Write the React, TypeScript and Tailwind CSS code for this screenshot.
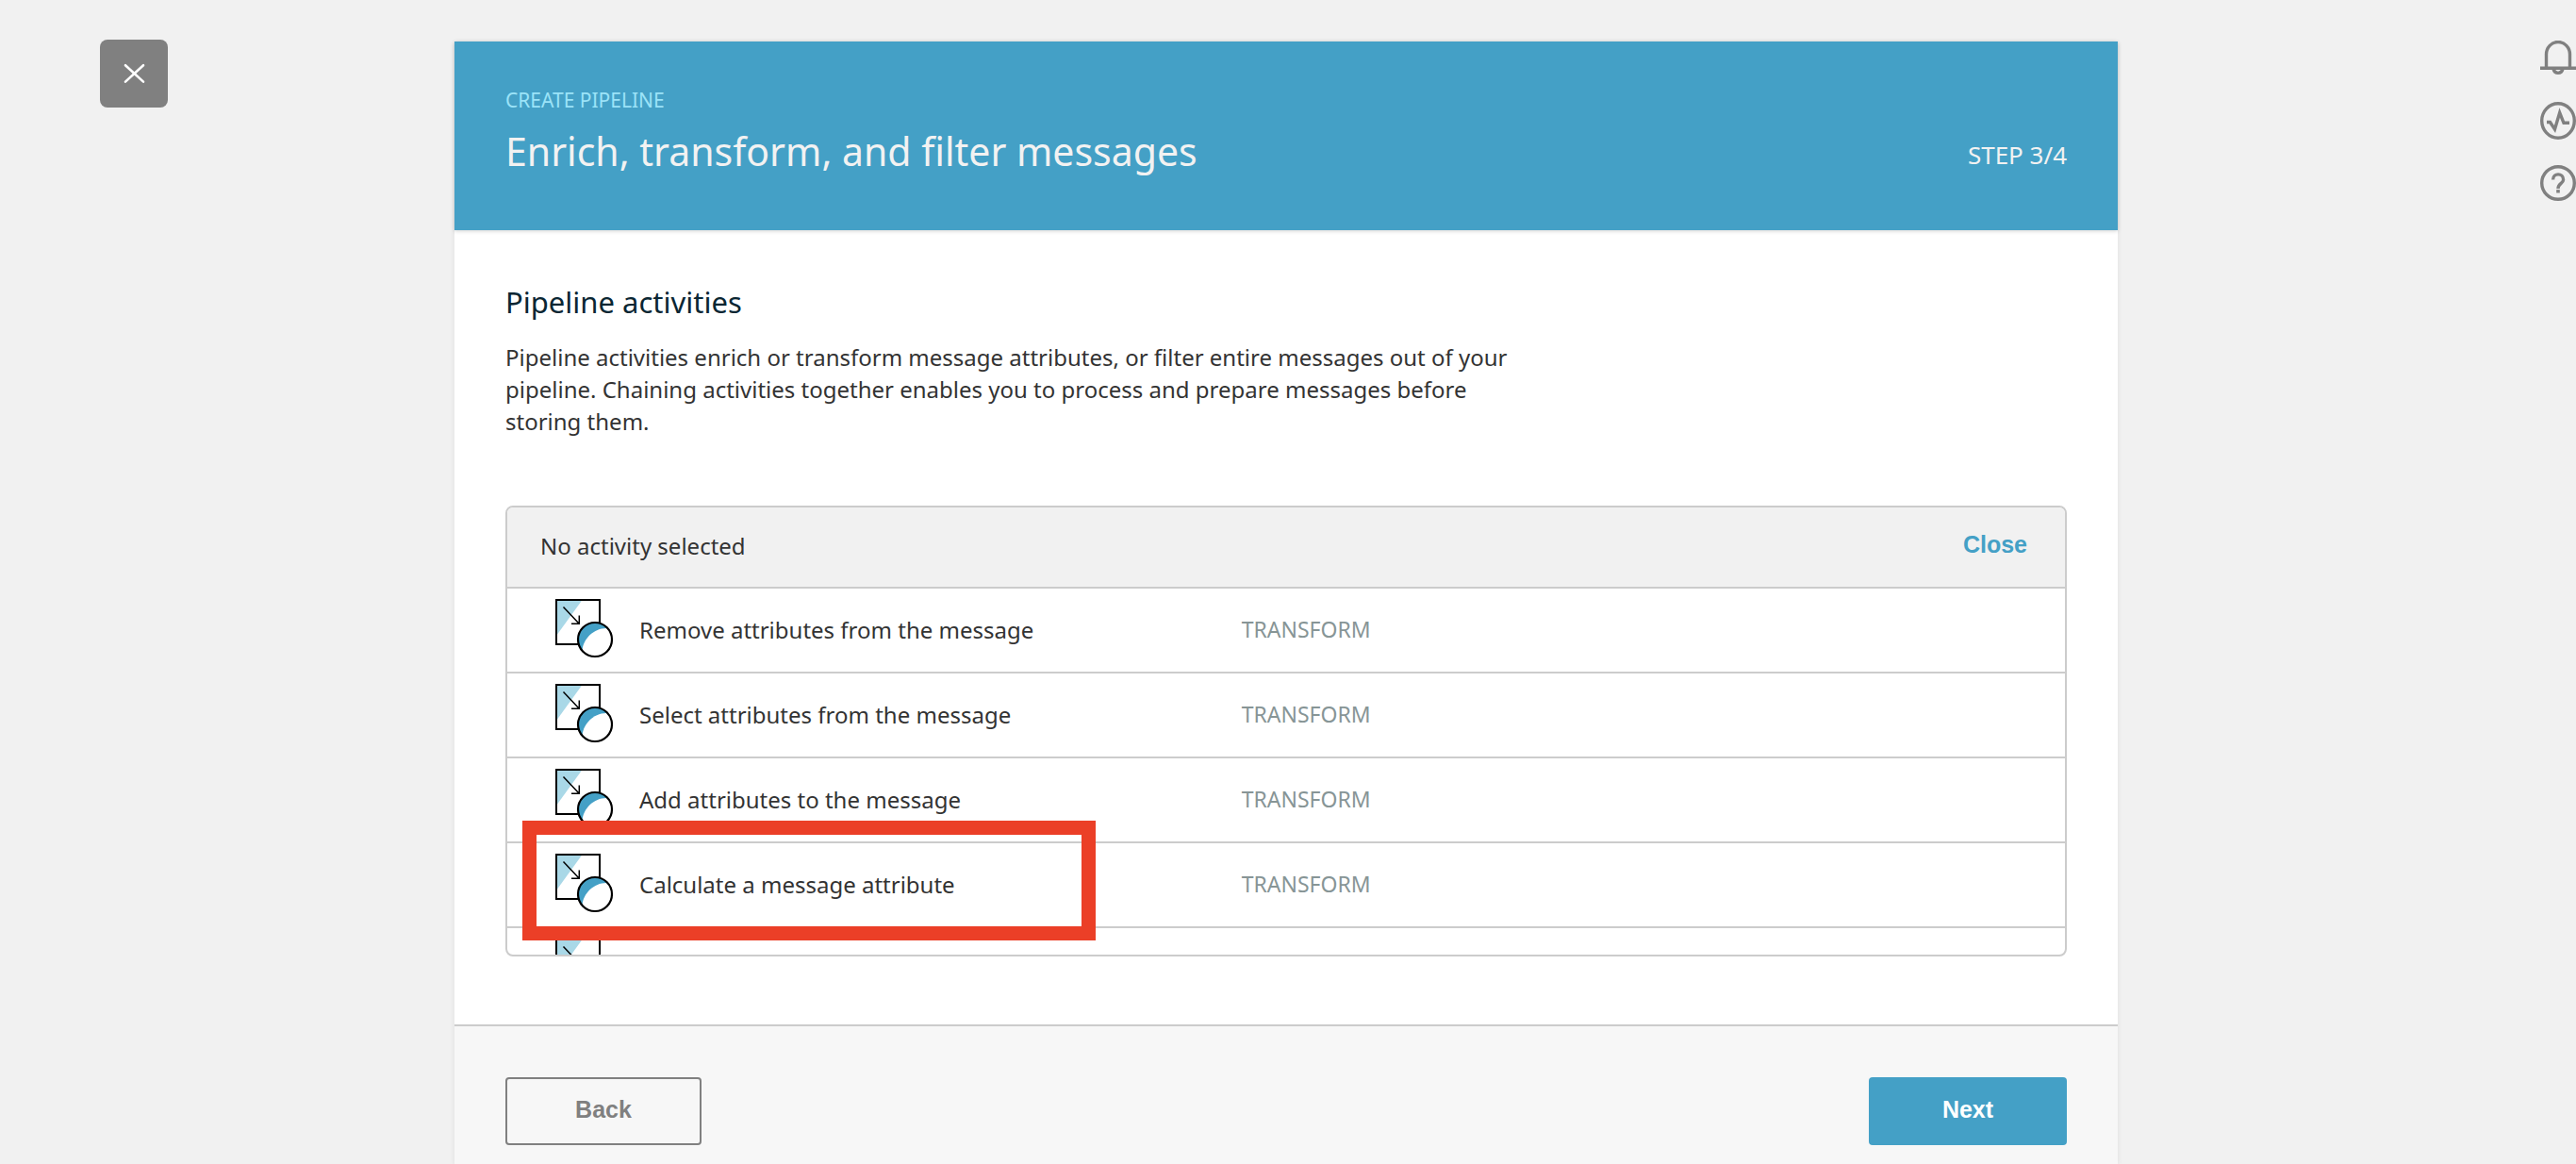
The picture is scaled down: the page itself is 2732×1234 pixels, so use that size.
import { useState } from "react";

function CloseIcon() {
  return (
    <svg className="h-6 w-6" viewBox="0 0 24 24" fill="none" stroke="white" strokeWidth="2.6" strokeLinecap="round" aria-hidden="true">
      <path d="M3 3.2 L22 20.6 M22 3.2 L3 20.6" />
    </svg>
  );
}

function BellIcon() {
  return (
    <svg className="h-[38px] w-[38px]" viewBox="0 0 38 38" fill="none" stroke="#808080" strokeWidth="3.4" aria-hidden="true">
      <path d="M6.5 29 V14.5 A12.5 13 0 0 1 31.5 14.5 V29" />
      <path d="M0 29.3 H38" />
      <path d="M14 30 A5.2 6 0 0 0 24 30" />
    </svg>
  );
}

function ActivityIcon() {
  return (
    <svg className="h-10 w-[38px]" viewBox="0 0 38 40" fill="none" stroke="#808080" strokeWidth="3.4" aria-hidden="true">
      <ellipse cx="19" cy="20" rx="17.3" ry="18.3" />
      <path d="M7 21.5 H10.5 L15.5 29 L20.7 11.5 L25 22.3 H31" />
    </svg>
  );
}

function HelpIcon() {
  return (
    <svg className="h-[38px] w-[38px]" viewBox="0 0 38 38" fill="none" stroke="#808080" strokeWidth="3.4" aria-hidden="true">
      <circle cx="19" cy="19" r="17.3" />
      <path d="M13.6 15.5 C13.6 8 24.6 8 24.6 15.5 C24.6 19.5 19 19.5 19 25" />
      <path d="M17.2 27.8 H20.8" />
    </svg>
  );
}

function TransformIcon() {
  return (
    <svg className="h-16 w-[62px]" viewBox="0 0 62 64" fill="none" aria-hidden="true">
      <path d="M1 1 H47 V48 H1 Z" fill="white" />
      <path d="M1 1 H28.5 L1 39 Z" fill="#a9d8e7" />
      <path d="M1 1 H47 V48 H1 Z" stroke="black" strokeWidth="2" />
      <path d="M8.5 8.5 L25 26 M17 26.2 H25.3 V17.5" stroke="black" strokeWidth="1.5" />
      <circle cx="42" cy="43" r="18" fill="#44a0c6" />
      <path d="M54 31 C41 31 29.5 42 28.5 54.8 A18 18 0 1 0 54 31 Z" fill="white" />
      <circle cx="42" cy="43" r="18" stroke="black" strokeWidth="2.2" />
    </svg>
  );
}

const activities = [
  { name: "Remove attributes from the message", kind: "TRANSFORM", marked: false },
  { name: "Select attributes from the message", kind: "TRANSFORM", marked: false },
  { name: "Add attributes to the message", kind: "TRANSFORM", marked: false },
  { name: "Calculate a message attribute", kind: "TRANSFORM", marked: true },
];

export default function App() {
  const [selected, setSelected] = useState("No activity selected");

  return (
    <div className="grid min-h-screen grid-cols-[482fr_1764fr_486fr] bg-[#f1f1f1] pt-[42px] font-['Noto_Sans',sans-serif] text-2xl text-[#333]">
      <div className="pl-[106px]">
        <button type="button" aria-label="Close wizard" className="flex size-[72px] items-center justify-center rounded-lg bg-[#808080]">
          <CloseIcon />
        </button>
      </div>

      <main className="mt-0.5 flex flex-col bg-white shadow-[0_1px_6px_rgba(0,0,0,0.08)]">
        <header className="flex items-end justify-between bg-[#44a0c6] px-[54px] pt-12 pb-14 text-[#f2f2f2] shadow-[0_1px_4px_rgba(0,0,0,0.18)]">
          <div>
            <p className="text-[21px] leading-7 text-[#9be3f8]">CREATE PIPELINE</p>
            <h1 className="mt-3 text-[41px] leading-[56px]">Enrich, transform, and filter messages</h1>
          </div>
          <p className="pb-1.5 text-[26px] leading-9">STEP 3/4</p>
        </header>

        <section className="px-[54px] pt-14">
          <h2 className="text-[31px] leading-10 text-[#0a2633]">Pipeline activities</h2>
          <p className="mt-[22px] max-w-[1090px] leading-[34px]">
            Pipeline activities enrich or transform message attributes, or filter entire messages out of your pipeline.
            Chaining activities together enables you to process and prepare messages before storing them.
          </p>
        </section>

        <section className="mx-[54px] mt-[72px] overflow-hidden rounded-lg border-2 border-[#ccc]">
          <div className="flex h-[86px] items-center justify-between border-b-2 border-[#ccc] bg-[#f1f1f1] pr-10 pb-0.5 pl-[35px]">
            <p>{selected}</p>
            <button type="button" className="pb-1 font-['Liberation_Sans',sans-serif] text-[25px] leading-8 font-bold text-[#44a0c6]">
              Close
            </button>
          </div>
          <ul className="h-[388px] overflow-hidden">
            {activities.map((a) => (
              <li key={a.name} className="relative border-b-2 border-[#ccc]">
                <button
                  type="button"
                  onClick={() => setSelected(a.name)}
                  className="grid h-[88px] w-full grid-cols-[638fr_876fr] items-center pb-0.5 pl-[51px] text-left"
                >
                  <span className="flex items-center gap-[27px]">
                    <TransformIcon />
                    <span className="pt-0.5">{a.name}</span>
                  </span>
                  <span className="pl-[53px] text-[23px] text-[#879596]">{a.kind}</span>
                </button>
                {a.marked && (
                  <div className="pointer-events-none absolute -top-6 left-4 z-10 h-[127px] w-[608px] border-[15px] border-[#eb3f27]" />
                )}
              </li>
            ))}
            <li>
              <button type="button" aria-label="Next activity" className="flex h-[88px] w-full items-center pb-0.5 pl-[51px]">
                <TransformIcon />
              </button>
            </li>
          </ul>
        </section>

        <footer className="mt-[72px] flex flex-1 items-start justify-between border-t-2 border-[#ccc] bg-[#f7f7f7] px-[54px] pt-[54px] font-['Liberation_Sans',sans-serif] text-[25px] font-bold">
          <button type="button" className="h-[72px] w-52 rounded border-2 border-[#808080] pb-0.5 text-[#808080]">
            Back
          </button>
          <button type="button" className="h-[72px] w-[210px] rounded bg-[#44a0c6] pb-0.5 text-white">
            Next
          </button>
        </footer>
      </main>

      <nav aria-label="Tools" className="flex flex-col items-end gap-[27px] pt-px">
        <button type="button" aria-label="Notifications"><BellIcon /></button>
        <button type="button" aria-label="Activity"><ActivityIcon /></button>
        <button type="button" aria-label="Help"><HelpIcon /></button>
      </nav>
    </div>
  );
}
